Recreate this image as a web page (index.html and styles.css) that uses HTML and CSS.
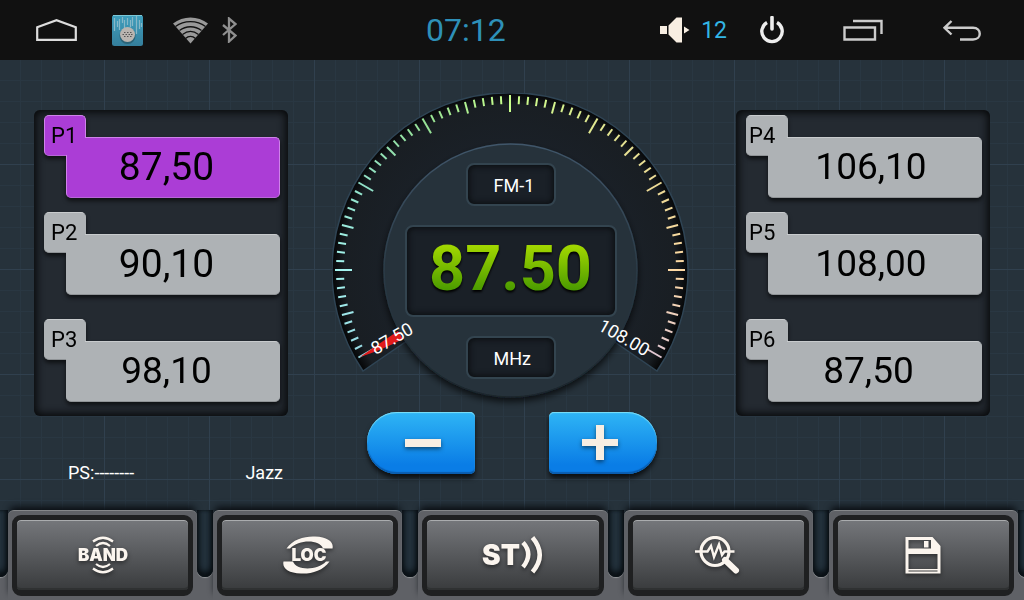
FILE: index.html
```
<!DOCTYPE html>
<html lang="en">
<head>
    <meta charset="UTF-8">
    <meta name="viewport" content="width=device-width, initial-scale=1.0">
    <title>Radio</title>
    <link rel="stylesheet" href="styles.css">
    <script src="script.js" defer></script>
</head>
<body>

    <header class="statusbar">
        <button class="icon-btn home" aria-label="Home">
            <svg width="41" height="22" viewBox="0 0 41 22"><path d="M1.2 20.8V8.2L20.5 1.2L39.8 8.2V20.8Z" fill="none" stroke="#ddd" stroke-width="2.2"/></svg>
        </button>
        <button class="icon-btn app" aria-label="Apps">
            <svg width="31" height="31" viewBox="0 0 31 31">
                <defs>
                    <linearGradient id="appBg" x2="0" y2="1"><stop offset="0" stop-color="#3f9fbd"/><stop offset="1" stop-color="#357f9c"/></linearGradient>
                </defs>
                <rect width="31" height="31" rx="2.5" fill="url(#appBg)"/>
                <path d="M1 .5H30" stroke="#7cc8d8"/>
                <path d="M2.5 3V16M5.5 6V12M7.5 4V15M10.5 2V8M12.5 5V14M15.5 3V10M18.5 5V12M20.5 2V11M24.5 1V19M27.5 5V14M29.5 8V12" stroke="#86b8c8" stroke-width="1.2"/>
                <circle cx="15.5" cy="21" r="8" fill="#2b6478"/>
                <circle cx="15.5" cy="19.5" r="7.5" fill="#b9b5b0"/>
                <path d="M12 17.5h1.5M15 17.5h1.5M18 17.5h1.5M10.5 19.5h1.5M13.5 19.5h1.5M16.5 19.5h1.5M19 19.5h1.5M12 21.5h1.5M15 21.5h1.5M18 21.5h1.5" stroke="#555" stroke-width="1.2"/>
            </svg>
        </button>
        <div class="signals">
            <svg width="35" height="27" viewBox="0 0 35 27">
                <path d="M17.5 26.5L0 6.5C10-1.5 25-1.5 35 6.5Z" fill="#999"/>
                <path d="M2.5 9.5C11 3 24 3 32.5 9.5M6.5 13.5C13 8.5 22 8.5 28.5 13.5M9.5 17.5C14.5 13.5 20.5 13.5 25.5 17.5M12.5 21.5C15.5 18.8 19.5 18.8 22.5 21.5" fill="none" stroke="#111" stroke-width="1.3"/>
            </svg>
            <svg width="15" height="26" viewBox="0 0 15 26"><path d="M1 8L13.5 18.5L7 24.5V1.5L13.5 7L1 18" fill="none" stroke="#8f8f8f" stroke-width="2.3"/></svg>
        </div>
        <time class="clock">07:12</time>
        <div class="actions">
            <button class="icon-btn volume" aria-label="Volume 12">
                <svg width="30" height="26" viewBox="0 0 30 26"><path d="M0 9H7V17H0ZM8.5 8.5L16.5 .5H22V25.5H16.5L8.5 17.5ZM24 9.5L29.5 13L24 16.5Z" fill="#f8eee2"/></svg>
                <span>12</span>
            </button>
            <button class="icon-btn" aria-label="Power">
                <svg width="24" height="28" viewBox="0 0 24 28"><path d="M7 6.5A10.2 10.2 0 1 0 17 6.5" fill="none" stroke="#eee" stroke-width="3.4"/><path d="M12 1.5V13" stroke="#eee" stroke-width="3.6" stroke-linecap="round"/></svg>
            </button>
            <button class="icon-btn nav" aria-label="Recent apps">
                <svg width="41" height="22" viewBox="0 0 41 22"><path d="M1.5 8.5H32V20.5H1.5ZM10 2H38.5V15" fill="none" stroke="#ccc" stroke-width="2.4"/></svg>
            </button>
            <button class="icon-btn nav" aria-label="Back">
                <svg width="38" height="21" viewBox="0 0 38 21"><path d="M8.5 1L1.5 7.8L8.5 14.5M1.5 7.8H30C39 8 39 19.5 30 19.5H17" fill="none" stroke="#ccc" stroke-width="2.4"/></svg>
            </button>
        </div>
    </header>

    <main class="radio">
        <section class="side">
            <div class="panel">
                <button class="preset active"><span class="tab">P1</span><span class="freq">87,50</span></button>
                <button class="preset"><span class="tab">P2</span><span class="freq">90,10</span></button>
                <button class="preset"><span class="tab">P3</span><span class="freq">98,10</span></button>
            </div>
            <p class="rds"><span>PS:--------</span><span>Jazz</span></p>
        </section>

        <section class="tuner">
            <div class="dial">
                <svg class="gauge" width="357" height="318" viewBox="-178 -177 357 318">
                    <defs>
                        <radialGradient id="ring" gradientUnits="userSpaceOnUse" cx="0" cy="0" r="178">
                            <stop offset=".7" stop-color="#1a2027"/>
                            <stop offset=".93" stop-color="#191e23"/>
                            <stop offset="1" stop-color="#050607"/>
                        </radialGradient>
                        <linearGradient id="rim" x2="0" y2="1">
                            <stop offset="0" stop-color="#40566a"/>
                            <stop offset=".5" stop-color="#2b3b47"/>
                            <stop offset="1" stop-color="#1b252c"/>
                        </linearGradient>
                        <filter id="knobShadow" x="-20%" y="-20%" width="140%" height="140%">
                            <feDropShadow dx="0" dy="4" stdDeviation="3.5" flood-color="#000" flood-opacity=".7"/>
                        </filter>
                    </defs>
                    <path d="M-147 101A178 178 0 1 1 147 101L99 68A120 120 0 1 0 -99 68Z" fill="url(#ring)" stroke="#2f4454" stroke-width="1.5"/>
                    <circle cx=".5" cy=".5" r="126.5" fill="#26323b" stroke="url(#rim)" stroke-width="1.5" filter="url(#knobShadow)"/>
                    <g id="ticks"></g>
                    <path d="M-150 87Q-130 73 -112 61L-107 69Q-128 80 -150 87Z" fill="#e01b1b"/>
                    <text class="scale" x="-115" y="74" text-anchor="middle" transform="rotate(-30 -115 74)">87.50</text>
                    <text class="scale" x="111" y="73" text-anchor="middle" transform="rotate(30 111 73)">108.00</text>
                </svg>
                <div class="readout">
                    <div class="lcd small">FM-1</div>
                    <div class="lcd big"><span>87.50</span></div>
                    <div class="lcd small">MHz</div>
                </div>
            </div>
            <div class="steps">
                <button class="step down" aria-label="Tune down">
                    <svg width="36" height="36" viewBox="0 0 36 36"><path d="M0 14H36V22H0Z" fill="#f8eee2"/></svg>
                </button>
                <button class="step up" aria-label="Tune up">
                    <svg width="36" height="36" viewBox="0 0 36 36"><path d="M14 0H22V14H36V21H22V35H14V21H0V14H14Z" fill="#f8eee2"/></svg>
                </button>
            </div>
        </section>

        <section class="side right">
            <div class="panel">
                <button class="preset"><span class="tab">P4</span><span class="freq">106,10</span></button>
                <button class="preset"><span class="tab">P5</span><span class="freq">108,00</span></button>
                <button class="preset"><span class="tab">P6</span><span class="freq">87,50</span></button>
            </div>
        </section>
    </main>

    <footer class="keys">
        <i class="slot"></i>
        <div class="key">
            <button aria-label="Band">
                <svg width="54" height="38" viewBox="0 0 54 38">
                    <path d="M17 5.5Q27-2 37 5.5M20 10Q27 4 34 10M17 32.5Q27 40 37 32.5M20 28Q27 34 34 28" fill="none" stroke="#fbf5ee" stroke-width="2.2"/>
                    <text class="key-text" x="27" y="25" text-anchor="middle">BAND</text>
                </svg>
            </button>
        </div>
        <i class="slot"></i>
        <div class="key">
            <button aria-label="Local">
                <svg width="50" height="38" viewBox="0 0 50 38">
                    <path d="M3.5 12.5C10 3 22 0 32 .5C45 1 51 6 49.5 12.5H40C37 3.5 16 3 7 12.5ZM46.5 25.5C40 35 28 38 18 37.5C5 37 -1 32 .5 25.5H10C13 34.5 34 35 43 25.5Z" fill="#fbf5ee"/>
                    <text class="key-text" x="26" y="25" text-anchor="middle">LOC</text>
                </svg>
            </button>
        </div>
        <i class="slot"></i>
        <div class="key">
            <button aria-label="Stereo">
                <svg width="62" height="38" viewBox="0 0 62 38">
                    <text class="key-text large" x="0" y="29">ST</text>
                    <path d="M41 6.5Q51.5 18 41 31M50.5 1.5Q65 19 50.5 36" fill="none" stroke="#fbf5ee" stroke-width="4.5"/>
                </svg>
            </button>
        </div>
        <i class="slot"></i>
        <div class="key">
            <button aria-label="Scan">
                <svg width="46" height="38" viewBox="0 0 46 38">
                    <circle cx="20" cy="15.5" r="14" fill="none" stroke="#fbf5ee" stroke-width="3.2"/>
                    <path d="M0 15.5H12.5L16 10L19 21L24 8.5L27 19L29.5 15.5H39.5" fill="none" stroke="#fbf5ee" stroke-width="2.4"/>
                    <path d="M30 24L41 34.5" stroke="#fbf5ee" stroke-width="6" stroke-linecap="round"/>
                </svg>
            </button>
        </div>
        <i class="slot"></i>
        <div class="key">
            <button aria-label="Save">
                <svg width="36" height="38" viewBox="0 0 36 38">
                    <path fill-rule="evenodd" d="M.5 1H27.5L35.5 10V37.5H.5ZM3.5 4V12.5H26V4ZM3.5 18V33H32.5V18ZM3.5 34.5V35.5H32.5V34.5Z" fill="#fbf5ee"/>
                    <path d="M19 5H23.5V11.5H19Z" fill="#fbf5ee"/>
                </svg>
            </button>
        </div>
        <i class="slot"></i>
    </footer>

</body>
</html>
```
FILE: styles.css
```
* { box-sizing: border-box; }
body {
    margin: 0;
    min-height: 100vh;
    display: flex;
    flex-direction: column;
    overflow-x: hidden;
    font-family: Roboto, sans-serif;
    color: #fff;
    background: #26323b;
}
button {
    padding: 0;
    border: none;
    background: none;
    font-family: inherit;
    color: inherit;
    cursor: pointer;
}
svg { display: block; }

/* status bar */
.statusbar {
    display: flex;
    align-items: center;
    height: 60px;
    padding: 0 43px 0 36px;
    background: #111;
}
.icon-btn { display: flex; align-items: center; }
.app { margin-left: 35px; }
.signals {
    display: flex;
    align-items: center;
    gap: 14px;
    margin-left: 30px;
}
.clock {
    margin-left: 189px;
    font-size: 32px;
    line-height: 60px;
    color: #2e90b8;
}
.actions {
    display: flex;
    align-items: center;
    margin-left: auto;
    gap: 33px;
}
.volume {
    gap: 11px;
    font-size: 23px;
    color: #33b5e5;
}
.nav { margin-left: 26px; }

/* main area */
.radio {
    flex: 1;
    display: grid;
    grid-template-columns: 254px 1fr 254px;
    align-items: start;
    margin-bottom: -90px;
    padding: 33px 34px 90px;
    background-image:
        linear-gradient(to right, transparent 104px, #30404e 104px),
        linear-gradient(to bottom, transparent 104px, #30404e 104px),
        linear-gradient(to right, transparent 20px, #293742 20px),
        linear-gradient(to bottom, transparent 20px, #293742 20px);
    background-size: 105px 105px, 105px 105px, 21px 21px, 21px 21px;
}
.side { padding-top: 17px; }
.panel {
    height: 306px;
    padding: 5px 8px 0 10px;
    border-radius: 6px;
    background: #242a31;
    box-shadow: inset 0 0 8px 2px #050607;
}
.preset {
    display: grid;
    grid-template-columns: 22px 20px 1fr;
    grid-template-rows: 22px 19px 42px;
    width: 100%;
    margin-bottom: 14px;
    color: #000;
    filter: drop-shadow(0 3px 2px rgba(0, 0, 0, 0.6));
    --fill: #aeb2b5;
    --edge: #c8cbcd;
    --low: #8f9396;
}
.preset:last-child { margin-top: 24px; }
.active {
    --fill: #ab3dd6;
    --edge: #cf82ea;
    --low: #b866d8;
}
/* the plate behind the tab label */
.preset::before {
    content: "";
    border-radius: 5px 5px 0 5px;
}
.preset::before, .freq {
    background: var(--fill);
    border: 1px solid var(--fill);
    border-top-color: var(--edge);
    border-bottom-color: var(--low);
}
.active::before, .active .freq {
    border-left-color: var(--edge);
    border-right-color: var(--edge);
}
.preset::before, .tab { grid-area: 1 / 1 / 3 / 3; }
.tab {
    z-index: 2;
    padding-left: 7px;
    font-size: 22px;
    line-height: 41px;
    text-align: left;
}
.freq {
    position: relative;
    grid-area: 2 / 2 / 4 / 4;
    padding-right: 13px;
    border-radius: 0 5px 5px 5px;
    font-size: 39px;
    line-height: 58px;
    text-align: center;
}
/* hides the seam where the tab and the body meet */
.freq::before {
    content: "";
    position: absolute;
    top: -1px;
    left: -1px;
    width: 19px;
    height: 18px;
    background: var(--fill);
}
.right .tab { padding-left: 3px; }
.right .freq { padding-right: 8px; }
.right .freq, .preset:last-child .freq { font-size: 37px; }
.preset:last-child .freq { padding-right: 13px; }
.rds {
    display: flex;
    justify-content: space-between;
    margin: 47px 0 0;
    padding: 0 5px 0 34px;
    font-size: 18px;
    line-height: 20px;
}

/* dial */
.tuner {
    display: flex;
    flex-direction: column;
    align-items: center;
}
.dial {
    display: grid;
    height: 319px;
    padding-right: 3px;
}
.gauge, .readout { grid-area: 1 / 1; }
.scale { font-size: 18px; fill: #fff; }
.readout {
    display: flex;
    flex-direction: column;
    align-items: center;
    gap: 19px;
    padding-top: 70px;
}
.lcd {
    border: 2px solid #33444f;
    border-radius: 8px;
    background: #1a2027;
    box-shadow: inset 0 0 6px 1px #0a0c0f;
}
.small {
    width: 90px;
    height: 43px;
    padding-left: 26px;
    font-size: 18px;
    line-height: 41px;
}
.big {
    width: 212px;
    height: 92px;
    text-align: center;
    font-size: 63px;
    font-weight: bold;
    line-height: 84px;
}
.big span {
    background: linear-gradient(#a0d600 20%, #4a9a00 80%);
    -webkit-background-clip: text;
    background-clip: text;
    color: transparent;
    filter: drop-shadow(0 2px 1px #000);
}
.steps { display: flex; gap: 74px; }
.step {
    display: flex;
    align-items: center;
    justify-content: center;
    width: 108px;
    height: 62px;
    background: linear-gradient(#2fb5f5, #0a7de6 85%);
    box-shadow: 0 4px 5px rgba(0, 0, 0, 0.7), inset 0 1px 1px #7fe0f8, inset 0 -2px 1px #0a5cae;
}
.step svg, .keys svg { filter: drop-shadow(0 2px 2px rgba(0, 0, 0, 0.5)); }
.down { padding-left: 4px; border-radius: 30px 5px 5px 30px; }
.up { padding-right: 6px; border-radius: 5px 30px 30px 5px; }

/* bottom keys */
.keys {
    display: flex;
    height: 90px;
    margin: 0 -10px 0 -8px;
}
.slot {
    flex: 0 0 16px;
    background: linear-gradient(transparent 60px, #5f6166 60px);
}
.slot::before {
    content: "";
    display: block;
    height: 67px;
    border-radius: 0 0 8px 8px;
    background: #22303a;
    box-shadow: inset 3px 0 4px -1px #0b1116, inset -3px 0 4px -1px #0b1116, inset 0 -6px 6px -1px #0b1116, 0 1px 1px #96989b;
}
.key {
    flex: 1;
    display: flex;
    padding: 4px;
    border-top: 1px solid #85878a;
    border-radius: 6px 6px 0 0;
    background: #5f6166;
    box-shadow: 0 -5px 7px -2px #080c10;
}
.key > button {
    flex: 1;
    display: flex;
    align-items: center;
    justify-content: center;
    border: solid #1f2021;
    border-width: 5px 5px 6px;
    border-radius: 9px;
    background: linear-gradient(#75777b, #393b3d) padding-box;
    box-shadow: inset 0 1px 0 #aaacae, inset 0 -2px 0 #2f3132;
}
.key-text {
    font-family: Inter, sans-serif;
    font-size: 17px;
    font-weight: 900;
    fill: #fbf5ee;
}
.large { font-size: 28px; }
```
FILE: script.js
```
// scale colours, one for every 10 ticks
const stops = [
    [150, 215, 225], [165, 245, 240], [145, 225, 200], [150, 225, 150], [200, 255, 140],
    [225, 232, 145], [236, 218, 150], [255, 218, 165], [225, 200, 210]
];

function tickColor(i) {
    const n = Math.min(Math.floor(i / 10), stops.length - 2);
    const t = i / 10 - n;
    return "rgb(" + stops[n].map((c, k) => Math.round(c + (stops[n + 1][k] - c) * t)).join(",") + ")";
}

const ticks = document.getElementById("ticks");
for (let i = 0; i <= 80; i++) {
    const line = document.createElementNS("http://www.w3.org/2000/svg", "line");
    const inner = i % 10 === 0 ? 158 : i % 5 === 0 ? 162 : 166;
    const outer = i % 10 === 0 ? 175 : 174;
    line.setAttribute("x1", -outer);
    line.setAttribute("x2", -inner);
    line.setAttribute("stroke", tickColor(i));
    line.setAttribute("stroke-width", 2);
    line.setAttribute("transform", `rotate(${i * 3 - 30})`);
    ticks.appendChild(line);
}
```
